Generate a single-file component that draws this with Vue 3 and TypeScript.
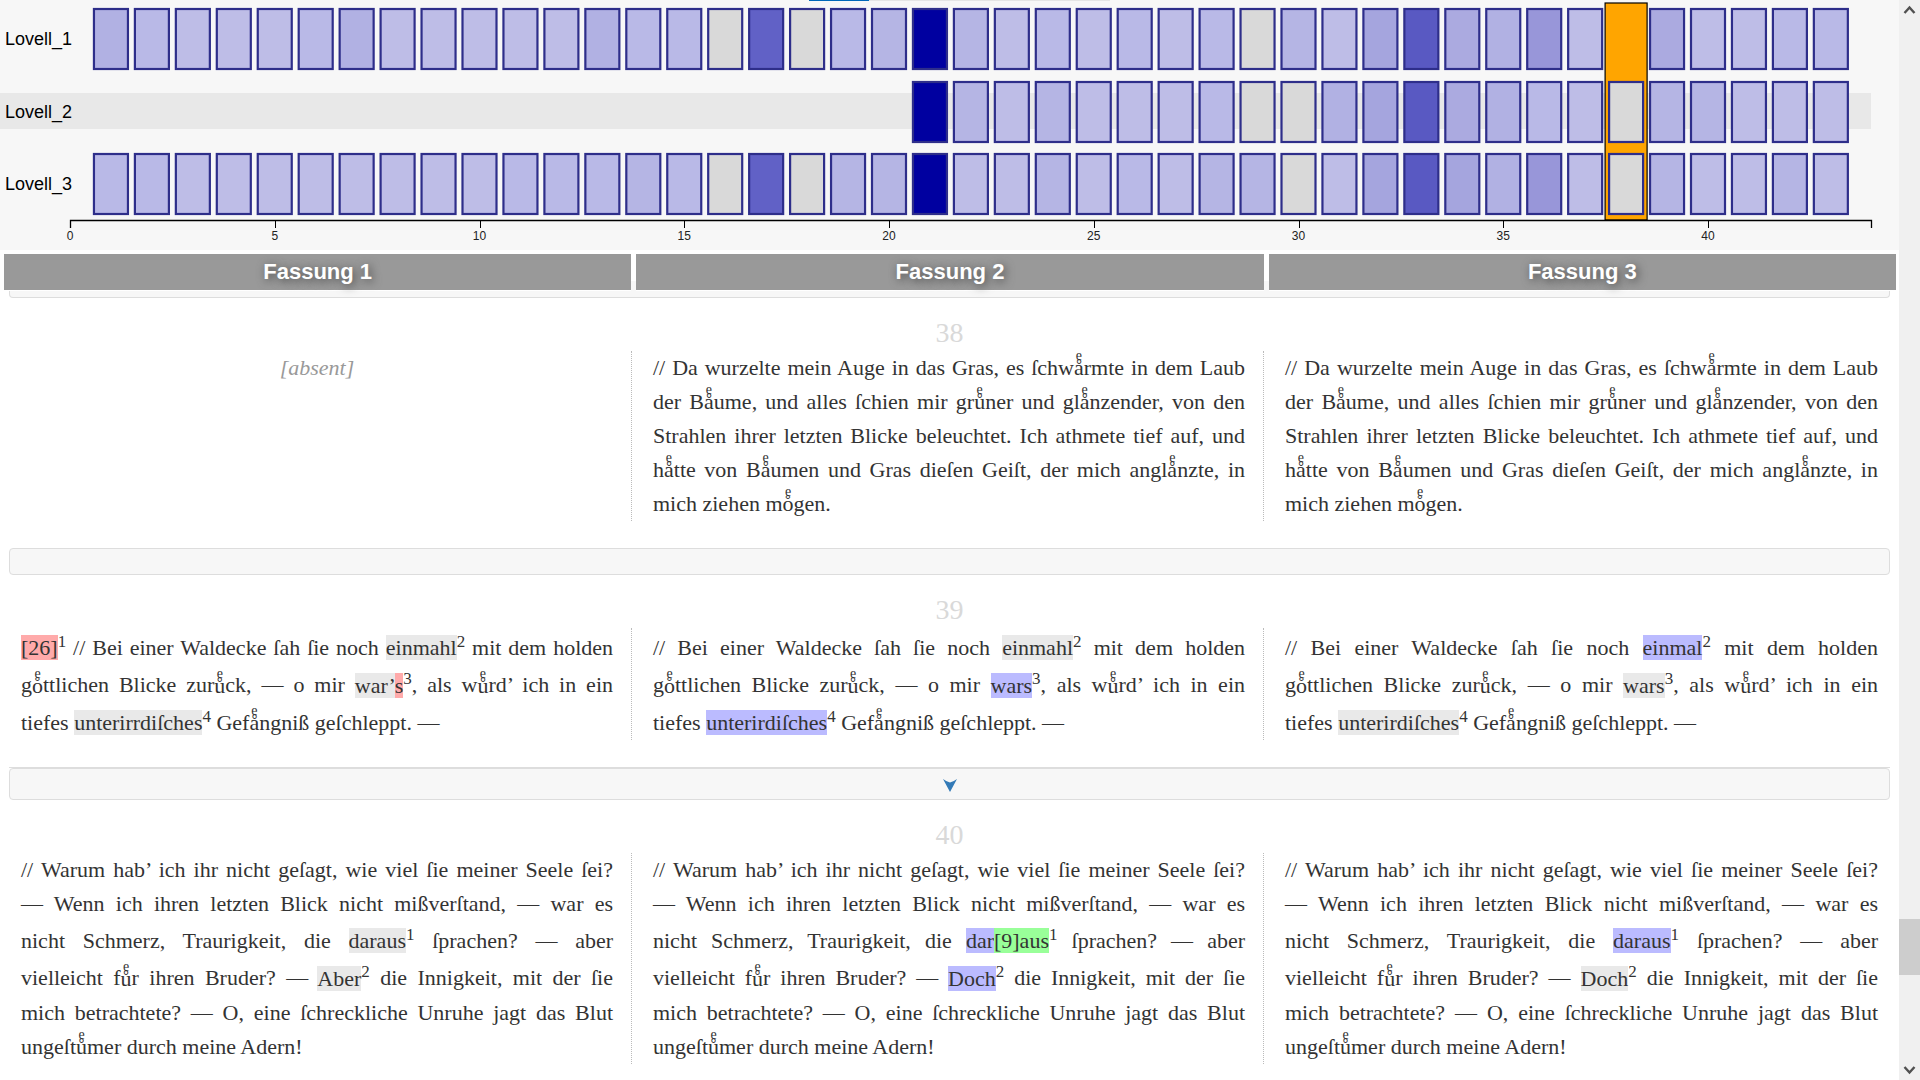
<script setup lang="ts">
type Tone = 'grey' | 'blue' | 'red' | 'green'
interface Run { t: string; hl?: Tone; sup?: string }
interface Section { id: number; gate: 'plain' | 'link' | 'none'; texts: (Run[][] | null)[] }
interface Bar { n: number; fill: string; row: number }

const UNIT = 40.95
const ORIGIN = 70
const xOf = (n: number) => ORIGIN + n * UNIT

const palette: Record<string, string> = {
  a: '#b1b1e3', m: '#b5b5e4', b: '#b9b9e7', c: '#bebde7', g: '#d9d9d9',
  d: '#a5a5de', e: '#abaae0', p: '#9896d9', D: '#6161c6', K: '#5959c2', N: '#0000a0',
}

// One letter per segment, a dot where the witness lacks the segment.
const witnesses = [
  { name: 'Lovell_1', codes: 'abcccbacccccabbgDgbmNmcbcbcbgmcdKeapc.eccbb' },
  { name: 'Lovell_2', codes: '....................NmcmcccbggadKeabcgmmccc' },
  { name: 'Lovell_3', codes: 'bbccccccccbbbmbgDgmmNccmcbcmmgcdKdapcgmccmc' },
]
const rowTop = [8, 81, 153]

const bars: Bar[] = witnesses.flatMap((w, row) =>
  w.codes.split('').map((c, i) => ({ n: i + 1, fill: palette[c] ?? '', row })).filter((b) => b.fill),
)
const ticks = [0, 5, 10, 15, 20, 25, 30, 35, 40]
const editions = ['Fassung 1', 'Fassung 2', 'Fassung 3']

const t = (s: string): Run => ({ t: s })
const h = (s: string, hl: Tone, sup?: string): Run => ({ t: s, hl, sup })

// "|" ends a printed line.
function setLines(runs: Run[]): Run[][] {
  const lines: Run[][] = [[]]
  for (const run of runs) {
    run.t.split('|').forEach((part, i) => {
      if (i > 0) lines.push([])
      if (part) lines[lines.length - 1].push({ ...run, t: part })
    })
  }
  return lines
}

// "^" after a letter puts a small e above it; o has no ringed form and gets its ring here.
function letters(s: string): { text: string; e: boolean }[] {
  return s.split(/([^\s^]\^)/).filter(Boolean)
    .map((p) => (p.endsWith('^') ? { text: p.slice(0, -1), e: true } : { text: p, e: false }))
}

const da = setLines([t('// Da wurzelte mein Auge in das Gras, es ſchwå^rmte in dem Laub|der Bå^ume, und alles ſchien mir grů^ner und glå^nzender, von den|Strahlen ihrer letzten Blicke beleuchtet. Ich athmete tief auf, und|hå^tte von Bå^umen und Gras dieſen Geiſt, der mich anglå^nzte, in|mich ziehen mo^gen.')])
const bei = '// Bei einer Waldecke ſah ſie noch '
const mit = ' mit dem holden|go^ttlichen Blicke zurů^ck, — o mir '
const als = ', als wů^rd’ ich in ein|tiefes '
const gef = ' Gefå^ngniß geſchleppt. —'
const warum = '// Warum hab’ ich ihr nicht geſagt, wie viel ſie meiner Seele ſei?|— Wenn ich ihren letzten Blick nicht mißverſtand, — war es|nicht Schmerz, Traurigkeit, die '
const spr = ' ſprachen? — aber|vielleicht fů^r ihren Bruder? — '
const inn = ' die Innigkeit, mit der ſie|mich betrachtete? — O, eine ſchreckliche Unruhe jagt das Blut|ungeſtů^mer durch meine Adern!'

const sections: Section[] = [
  { id: 38, gate: 'plain', texts: [null, da, da] },
  {
    id: 39, gate: 'link', texts: [
      setLines([h('[26]', 'red', '1'), t(' ' + bei), h('einmahl', 'grey', '2'), t(mit), h('war’', 'grey'), h('s', 'red', '3'), t(als), h('unterirrdiſches', 'grey', '4'), t(gef)]),
      setLines([t(bei), h('einmahl', 'grey', '2'), t(mit), h('wars', 'blue', '3'), t(als), h('unterirdiſches', 'blue', '4'), t(gef)]),
      setLines([t(bei), h('einmal', 'blue', '2'), t(mit), h('wars', 'grey', '3'), t(als), h('unterirdiſches', 'grey', '4'), t(gef)]),
    ],
  },
  {
    id: 40, gate: 'none', texts: [
      setLines([t(warum), h('daraus', 'grey', '1'), t(spr), h('Aber', 'grey', '2'), t(inn)]),
      setLines([t(warum), h('dar', 'blue'), h('[9]aus', 'green', '1'), t(spr), h('Doch', 'blue', '2'), t(inn)]),
      setLines([t(warum), h('daraus', 'blue', '1'), t(spr), h('Doch', 'grey', '2'), t(inn)]),
    ],
  },
]
</script>

<template>
  <div class="window">
    <main class="page">
      <div class="chart">
        <div class="progress"><span class="done"></span><span class="rest"></span></div>
        <svg viewBox="0 0 1899 249" role="img" aria-label="Lovell">
          <rect x="0" y="92" width="1871" height="36" fill="#e8e8e8" />
          <rect :x="xOf(38) - 21" y="2" width="42" height="217" fill="#ffa500" stroke="#000" stroke-width="1.2" />
          <rect
            v-for="b in bars" :key="b.row + '-' + b.n" :x="xOf(b.n) - 17" :y="rowTop[b.row]"
            width="34" height="60" :fill="b.fill" stroke="#2e2e8a" stroke-width="2.2"
          />
          <text v-for="(w, i) in witnesses" :key="w.name" x="5" :y="rowTop[i] + 36" class="name">{{ w.name }}</text>
          <path d="M70.5 227V219.5H1871.5V227" fill="none" stroke="#000" stroke-width="1.3" />
          <g v-for="k in ticks" :key="k">
            <line :x1="Math.round(xOf(k)) + 0.5" :x2="Math.round(xOf(k)) + 0.5" y1="219" y2="227" stroke="#000" />
            <text :x="xOf(k)" y="239" class="tick">{{ k }}</text>
          </g>
        </svg>
      </div>

      <header class="editions">
        <h2 v-for="e in editions" :key="e">{{ e }}</h2>
      </header>

      <div class="gate first"></div>
      <template v-for="s in sections" :key="s.id">
        <section>
          <h3>{{ s.id }}</h3>
          <div class="columns">
            <div v-for="(lines, i) in s.texts" :key="i" class="cell">
              <p v-if="lines">
                <span v-for="(line, l) in lines" :key="l" class="line"><template v-for="(r, j) in line" :key="j"><mark v-if="r.hl" :class="r.hl">{{ r.t }}</mark><template v-else><template v-for="(p, k) in letters(r.t)" :key="k"><span v-if="p.e" class="over">{{ p.text }}<span v-if="p.text === 'o'" class="ring">˚</span><span class="small-e">e</span></span><template v-else>{{ p.text }}</template></template></template><sup v-if="r.sup">{{ r.sup }}</sup></template></span>
              </p>
              <p v-else class="absent">[absent]</p>
            </div>
          </div>
        </section>
        <div v-if="s.gate === 'plain'" class="gate"></div>
        <div v-if="s.gate === 'link'" class="linked">
          <button class="gate open" type="button" aria-label="39">
            <svg width="14" height="13" viewBox="0 0 14 13"><path d="M0 0Q4 3 7 3.5Q10 3 14 0L7 13Z" fill="#337ab7" /></svg>
          </button>
        </div>
      </template>
    </main>

    <aside class="scroll">
      <svg width="21" height="21" viewBox="0 0 21 21"><path d="M5.5 13L10.5 7.5L15.5 13" /></svg>
      <span class="above"></span>
      <span class="thumb"></span>
      <span class="below"></span>
      <svg width="21" height="21" viewBox="0 0 21 21"><path d="M5.5 8L10.5 13.5L15.5 8" /></svg>
    </aside>
  </div>
</template>

<style>
body { margin: 0; background: #fff; }
</style>

<style scoped>
.window {
  display: flex;
  height: 100vh;
  overflow: hidden;
  color: #333;
  font-family: "Liberation Serif", "Times New Roman", serif;
}
.page { flex: 1; min-width: 0; overflow: hidden; }

.chart { background: #f7f7f7; }
.chart svg { display: block; width: 100%; height: auto; }
.progress { display: flex; justify-content: center; height: 1px; padding-left: 20px; }
.progress span { height: 1px; }
.done { width: 60px; background: #0067b8; }
.rest { width: 241px; background: #e5e5e5; }
.name { font: 18px "Liberation Sans", Arial, sans-serif; fill: #000; }
.tick { font: 12px "Liberation Sans", Arial, sans-serif; fill: #222; text-anchor: middle; }

.editions {
  position: relative;
  z-index: 1;
  display: flex;
  gap: 5px;
  padding: 4px 3px 0 4px;
}
.editions h2 {
  flex: 1;
  margin: 0;
  border-bottom: 1px solid #fff;
  background: #999;
  color: #fff;
  font: bold 22px/36px "Liberation Sans", Arial, sans-serif;
  text-align: center;
  text-shadow: 2px 2px 10px #444;
}

.gate {
  box-sizing: border-box;
  height: 27px;
  margin: 0 9px;
  border: 1px solid #ddd;
  border-radius: 4px;
  background: #f7f7f7;
}
.gate.first { height: 17px; margin-top: -10px; border-top: 0; border-radius: 0 0 4px 4px; }
.linked { margin: 0 9px; border-top: 1px solid #ddd; }
.gate.open {
  display: flex;
  align-items: center;
  justify-content: center;
  width: 100%;
  height: 32px;
  margin: 0;
  padding: 3px 0 0;
}

section { padding: 17px 0 27px; }
h3 {
  margin: 0;
  color: #d9d9d9;
  font-size: 28px;
  font-weight: normal;
  line-height: 36px;
  text-align: center;
}
.columns { display: grid; grid-template-columns: repeat(3, 1fr); padding-right: 3px; }
.cell { padding: 0 18px 0 21px; border-right: 1px dotted #bbb; }
.cell:last-child { padding-right: 17px; border-right-color: transparent; }
p { margin: 0; font-size: 22px; line-height: 34px; }
.line { display: block; text-align: justify; text-align-last: justify; }
.line:last-child { text-align-last: left; }
.over { position: relative; }
.ring, .small-e {
  position: absolute;
  right: 0;
  left: 0;
  text-align-last: center;
}
.ring { bottom: 0; line-height: 26px; }
.small-e { bottom: 17px; font-size: 14px; line-height: 14px; }
.absent { color: #999; font-style: italic; text-align: center; }
sup { font-size: 17px; line-height: 28px; vertical-align: super; }
mark { color: inherit; }
.grey { background: #e9e9e9; }
.blue { background: #bbf; }
.red { background: #faa; }
.green { background: #9f9; }

.scroll { display: flex; flex-direction: column; width: 21px; background: #f0f0f0; }
.scroll path { fill: none; stroke: #505050; stroke-width: 2.4; }
.above { flex: 898; }
.thumb { flex: 56; background: #cdcdcd; }
.below { flex: 84; }
</style>
